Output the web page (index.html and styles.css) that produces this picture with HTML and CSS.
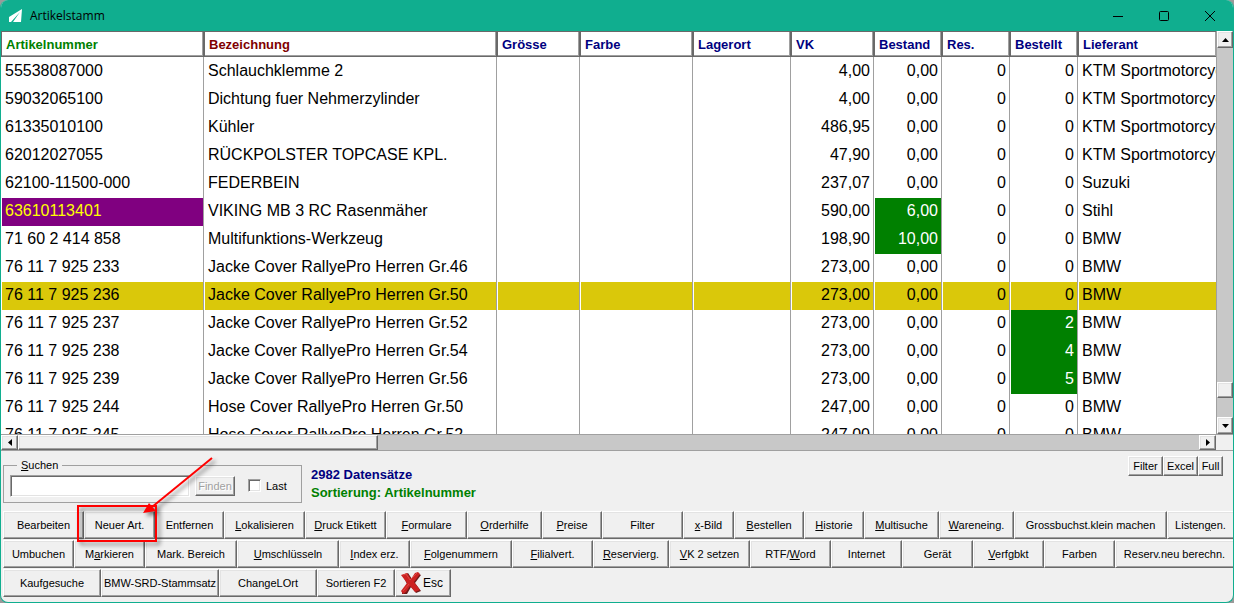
FILE: index.html
```
<!DOCTYPE html>
<html lang="de">
<head>
    <meta charset="UTF-8">
    <meta name="viewport" content="width=device-width, initial-scale=1.0">
    <title>Artikelstamm</title>
    <link rel="stylesheet" href="styles.css">
</head>
<body>
<div class="window">
    <header class="titlebar">
        <svg class="app-icon" width="14" height="14" viewBox="0 0 14 14">
            <path d="M13 0L0 8V13H2L11 3L4 13H12Z" fill="#fff"/>
        </svg>
        <span class="title">Artikelstamm</span>
        <button class="win-btn" aria-label="Minimieren"><svg width="12" height="12"><path d="M1 6.5H11"/></svg></button>
        <button class="win-btn" aria-label="Maximieren"><svg width="12" height="12"><rect x="1.5" y="1.5" width="9" height="9" rx="1"/></svg></button>
        <button class="win-btn" aria-label="Schliessen"><svg width="12" height="12"><path d="M1 1L11 11M11 1L1 11"/></svg></button>
    </header>

    <div class="grid-area">
        <div class="grid-view">
            <table class="articles">
                <colgroup>
                    <col class="c-nr"><col class="c-name"><col class="c-size"><col class="c-color"><col class="c-place">
                    <col class="c-vk"><col class="c-qty"><col class="c-qty"><col class="c-qty"><col>
                </colgroup>
                <thead>
                    <tr>
                        <th class="sorted">Artikelnummer</th><th class="key">Bezeichnung</th><th>Grösse</th><th>Farbe</th><th>Lagerort</th>
                        <th>VK</th><th>Bestand</th><th>Res.</th><th>Bestellt</th><th>Lieferant</th>
                    </tr>
                </thead>
                <tbody>
                    <tr><td>55538087000</td><td>Schlauchklemme 2</td><td></td><td></td><td></td><td class="num">4,00</td><td class="num">0,00</td><td class="num">0</td><td class="num">0</td><td>KTM Sportmotorcycle</td></tr>
                    <tr><td>59032065100</td><td>Dichtung fuer Nehmerzylinder</td><td></td><td></td><td></td><td class="num">4,00</td><td class="num">0,00</td><td class="num">0</td><td class="num">0</td><td>KTM Sportmotorcycle</td></tr>
                    <tr><td>61335010100</td><td>Kühler</td><td></td><td></td><td></td><td class="num">486,95</td><td class="num">0,00</td><td class="num">0</td><td class="num">0</td><td>KTM Sportmotorcycle</td></tr>
                    <tr><td>62012027055</td><td>RÜCKPOLSTER TOPCASE KPL.</td><td></td><td></td><td></td><td class="num">47,90</td><td class="num">0,00</td><td class="num">0</td><td class="num">0</td><td>KTM Sportmotorcycle</td></tr>
                    <tr><td>62100-11500-000</td><td>FEDERBEIN</td><td></td><td></td><td></td><td class="num">237,07</td><td class="num">0,00</td><td class="num">0</td><td class="num">0</td><td>Suzuki</td></tr>
                    <tr><td class="marked">63610113401</td><td>VIKING MB 3 RC Rasenmäher</td><td></td><td></td><td></td><td class="num">590,00</td><td class="num stock">6,00</td><td class="num">0</td><td class="num">0</td><td>Stihl</td></tr>
                    <tr><td>71 60 2 414 858</td><td>Multifunktions-Werkzeug</td><td></td><td></td><td></td><td class="num">198,90</td><td class="num stock">10,00</td><td class="num">0</td><td class="num">0</td><td>BMW</td></tr>
                    <tr><td>76 11 7 925 233</td><td>Jacke Cover RallyePro Herren Gr.46</td><td></td><td></td><td></td><td class="num">273,00</td><td class="num">0,00</td><td class="num">0</td><td class="num">0</td><td>BMW</td></tr>
                    <tr class="current"><td>76 11 7 925 236</td><td>Jacke Cover RallyePro Herren Gr.50</td><td></td><td></td><td></td><td class="num">273,00</td><td class="num">0,00</td><td class="num">0</td><td class="num">0</td><td>BMW</td></tr>
                    <tr><td>76 11 7 925 237</td><td>Jacke Cover RallyePro Herren Gr.52</td><td></td><td></td><td></td><td class="num">273,00</td><td class="num">0,00</td><td class="num">0</td><td class="num stock">2</td><td>BMW</td></tr>
                    <tr><td>76 11 7 925 238</td><td>Jacke Cover RallyePro Herren Gr.54</td><td></td><td></td><td></td><td class="num">273,00</td><td class="num">0,00</td><td class="num">0</td><td class="num stock">4</td><td>BMW</td></tr>
                    <tr><td>76 11 7 925 239</td><td>Jacke Cover RallyePro Herren Gr.56</td><td></td><td></td><td></td><td class="num">273,00</td><td class="num">0,00</td><td class="num">0</td><td class="num stock">5</td><td>BMW</td></tr>
                    <tr><td>76 11 7 925 244</td><td>Hose Cover RallyePro Herren Gr.50</td><td></td><td></td><td></td><td class="num">247,00</td><td class="num">0,00</td><td class="num">0</td><td class="num">0</td><td>BMW</td></tr>
                    <tr><td>76 11 7 925 245</td><td>Hose Cover RallyePro Herren Gr.52</td><td></td><td></td><td></td><td class="num">247,00</td><td class="num">0,00</td><td class="num">0</td><td class="num">0</td><td>BMW</td></tr>
                </tbody>
            </table>
        </div>
        <div class="scrollbar vertical">
            <button class="bevel scroll-btn" aria-label="Nach oben"><svg width="7" height="4"><path d="M0 4L3.5 0L7 4Z"/></svg></button>
            <div class="track before"></div>
            <div class="bevel thumb"></div>
            <div class="track after"></div>
            <button class="bevel scroll-btn" aria-label="Nach unten"><svg width="7" height="4"><path d="M0 0L3.5 4L7 0Z"/></svg></button>
        </div>
    </div>
    <div class="scrollbar horizontal">
        <button class="bevel scroll-btn" aria-label="Nach links"><svg width="4" height="7"><path d="M4 0L0 3.5L4 7Z"/></svg></button>
        <div class="bevel thumb"></div>
        <div class="track after"></div>
        <button class="bevel scroll-btn" aria-label="Nach rechts"><svg width="4" height="7"><path d="M0 0L4 3.5L0 7Z"/></svg></button>
    </div>

    <div class="panel">
        <div class="search-row">
            <fieldset class="search">
                <legend><label for="suche"><u>S</u>uchen</label></legend>
                <input type="text" id="suche">
                <button class="bevel" disabled>Finden</button>
                <input type="checkbox" id="last">
                <label for="last">Last</label>
            </fieldset>
            <div class="status">
                <div class="count">2982 Datensätze</div>
                <div class="sorting">Sortierung: Artikelnummer</div>
            </div>
            <div class="view-buttons">
                <button class="bevel">Filter</button>
                <button class="bevel">Excel</button>
                <button class="bevel">Full</button>
            </div>
        </div>

        <div class="toolbar row1">
            <button class="bevel">Bearbeiten</button>
            <button class="bevel">Neuer Art.</button>
            <button class="bevel">Entfernen</button>
            <button class="bevel"><u>L</u>okalisieren</button>
            <button class="bevel"><u>D</u>ruck Etikett</button>
            <button class="bevel"><u>F</u>ormulare</button>
            <button class="bevel"><u>O</u>rderhilfe</button>
            <button class="bevel"><u>P</u>reise</button>
            <button class="bevel">Filter</button>
            <button class="bevel"><u>x</u>-Bild</button>
            <button class="bevel"><u>B</u>estellen</button>
            <button class="bevel"><u>H</u>istorie</button>
            <button class="bevel"><u>M</u>ultisuche</button>
            <button class="bevel"><u>W</u>areneing.</button>
            <button class="bevel">Grossbuchst.klein machen</button>
            <button class="bevel cut">Listen<u>g</u>en.</button>
        </div>
        <div class="toolbar row2">
            <button class="bevel">Umbuchen</button>
            <button class="bevel">M<u>a</u>rkieren</button>
            <button class="bevel">Mark. Bereich</button>
            <button class="bevel"><u>U</u>mschlüsseln</button>
            <button class="bevel"><u>I</u>ndex erz.</button>
            <button class="bevel"><u>F</u>olgenummern</button>
            <button class="bevel"><u>F</u>ilialvert.</button>
            <button class="bevel"><u>R</u>eservierg.</button>
            <button class="bevel"><u>V</u>K 2 setzen</button>
            <button class="bevel">RTF/<u>W</u>ord</button>
            <button class="bevel">Internet</button>
            <button class="bevel">Gerät</button>
            <button class="bevel"><u>V</u>erfgbkt</button>
            <button class="bevel">Farben</button>
            <button class="bevel cut">Reserv.neu berechn.</button>
        </div>
        <div class="toolbar row3">
            <button class="bevel">Kaufgesuche</button>
            <button class="bevel">BMW-SRD-Stammsatz</button>
            <button class="bevel">ChangeLOrt</button>
            <button class="bevel">Sortieren F2</button>
            <button class="bevel esc">
                <svg width="20" height="23" viewBox="0 0 20 23">
                    <path d="M2 4L7 1L11 7L16 1L20 3L14 11L20 19L15 21L10 15L6 22L1 22L1 19L6 12Z" fill="#6e1a1a"/>
                    <path d="M0 3L6 1L10 7L14 1L17 0L19 2L13 10L19 18L14 20L9 14L5 20L2 22L0 19L6 11Z" fill="#cc2222"/>
                    <path d="M2 3L5 2L9 8L16 1M2 19L8 12" fill="none" stroke="#dd4a44"/>
                </svg>
                Esc
            </button>
        </div>

        <!-- Hinweis auf "Neuer Art." -->
        <svg class="callout" width="160" height="100" viewBox="0 0 160 100">
            <g class="callout-shape">
                <rect x="10" y="55" width="78" height="35" fill="none" stroke="#f00" stroke-width="2"/>
                <path d="M144 7L84 56" stroke="#f00" stroke-width="2"/>
                <path d="M75 62L81 52L88 60Z" fill="#f00"/>
            </g>
        </svg>
    </div>
</div>
</body>
</html>
```
FILE: styles.css
```
* {
    box-sizing: border-box;
}
body {
    margin: 0;
    background: #9a9a9a;
    font-family: "Liberation Sans", Arial, sans-serif;
    font-size: 11px;
    color: #000;
}
.window {
    display: flex;
    flex-direction: column;
    height: 100vh;
    border: 1px solid #10ae8f;
    border-top: 0;
    border-radius: 8px;
    overflow: hidden;
    background: #f0f0f0;
}

/* Title bar */
.titlebar {
    display: flex;
    align-items: center;
    flex: none;
    height: 31px;
    padding-left: 8px;
    background: #10ae8f;
}
.title {
    flex: 1;
    margin-left: 7px;
    font: 12px "Open Sans", sans-serif;
}
.win-btn {
    width: 46px;
    height: 31px;
    padding: 0;
    border: 0;
    background: none;
}
.win-btn svg {
    display: block;
    margin: 0 auto;
    fill: none;
    stroke: #000;
}

/* Raised button look */
button {
    font: inherit;
    color: inherit;
}
.bevel {
    min-width: 0;
    padding: 0;
    background: #f0f0f0;
    border: 1px solid;
    border-color: #fff #696969 #696969 #fff;
    border-radius: 0;
    box-shadow: inset -1px -1px #a0a0a0, inset 1px 1px #e3e3e3;
    white-space: nowrap;
}
.bevel:disabled {
    color: #a0a0a0;
    text-shadow: 1px 1px #fff;
}

/* Article table */
.grid-area {
    display: flex;
    flex: 1;
    min-height: 0;
}
.grid-view {
    flex: 1;
    overflow: hidden;
    background: #fff;
}
.articles {
    width: 100%;
    table-layout: fixed;
    border-collapse: separate;
    border-spacing: 0;
}
.c-nr { width: 203px; }
.c-name { width: 293px; }
.c-size { width: 83px; }
.c-color { width: 113px; }
.c-place { width: 98px; }
.c-vk { width: 83px; }
.c-qty { width: 68px; }

.articles th {
    height: 26px;
    padding: 0 4px;
    border: 1px solid #696969;
    box-shadow: inset -1px -1px #a0a0a0;
    font-size: 13px;
    text-align: left;
    color: #000080;
}
.articles th.sorted { color: #008000; }
.articles th.key { color: #800000; }
.articles td {
    height: 28px;
    padding: 0 3px 2px;
    border-left: 1px solid #fff;
    border-right: 1px solid #a0a0a0;
    background-clip: padding-box;
    font-size: 16px;
    line-height: 20px;
    white-space: nowrap;
    overflow: hidden;
}
.articles tbody tr:first-child td {
    height: 29px;
    padding-bottom: 1px;
}
.articles th:last-child,
.articles td:last-child {
    border-right: 0;
}
.articles .num { text-align: right; }
.articles .current td { background-color: #dac80a; }
.articles .marked {
    background-color: #800080;
    color: #ff0;
}
.articles .stock {
    background-color: #008000;
    color: #fff;
}

/* Scrollbars */
.scrollbar {
    display: flex;
    flex: none;
}
.scrollbar .track { background: #c8c8c8; }
.scroll-btn {
    flex: none;
    width: 17px;
    height: 17px;
}
.scroll-btn svg {
    display: block;
    margin: 0 auto;
}
.vertical {
    flex-direction: column;
    width: 17px;
    border-left: 1px solid #a0a0a0;
}
.vertical .scroll-btn { width: 16px; }
.vertical .before { flex: 335; }
.vertical .thumb { height: 16px; }
.vertical .after { flex: 19; }
.horizontal {
    height: 17px;
    padding-right: 17px;
    border-top: 1px solid #a0a0a0;
    border-bottom: 1px solid #a0a0a0;
}
.horizontal .scroll-btn { height: 15px; }
.horizontal .thumb { flex: 359; }
.horizontal .after { flex: 822; }

/* Lower panel */
.panel {
    position: relative;
    flex: none;
    padding: 5px 0 4px 2px;
}
.search-row {
    display: flex;
    align-items: flex-start;
    height: 55px;
}
.search {
    display: flex;
    align-items: center;
    width: 299px;
    height: 44px;
    margin: 3px 0 0;
    padding: 0 6px 2px;
    border: 1px solid #a0a0a0;
}
.search legend {
    margin-left: 7px;
    padding: 0 4px;
}
.search input[type="text"] {
    width: 180px;
    height: 22px;
    border: 1px solid;
    border-color: #a0a0a0 #fff #fff #a0a0a0;
    box-shadow: inset 1px 1px #696969, inset -1px -1px #e3e3e3;
    background: #fff;
}
.search button {
    width: 40px;
    height: 20px;
    margin-left: 5px;
}
.search input[type="checkbox"] {
    appearance: none;
    width: 13px;
    height: 13px;
    margin: 0 5px 0 13px;
    border: 1px solid;
    border-color: #a0a0a0 #fff #fff #a0a0a0;
    box-shadow: inset 1px 1px #696969, inset -1px -1px #e3e3e3;
    background: #fff;
}
.status {
    flex: 1;
    margin: 10px 0 0 9px;
    font-size: 13px;
    line-height: 18px;
    font-weight: bold;
}
.count { color: #000080; }
.sorting { color: #008000; }
.view-buttons {
    display: flex;
    margin-right: 10px;
}
.view-buttons button {
    width: 35px;
    height: 20px;
}
.view-buttons button:last-child { width: 25px; }

.toolbar {
    display: grid;
    height: 29px;
}
.row1 { grid-template-columns: 81fr 71fr 69fr 81fr 81fr 81fr 75fr 60fr 81fr 51fr 70fr 60fr 75fr 75fr 153fr 66fr; }
.row2 { grid-template-columns: 71fr 71fr 92fr 102fr 71fr 102fr 81fr 76fr 81fr 81fr 71fr 71fr 71fr 71fr 118fr; }
.row3 { grid-template-columns: 98fr 118fr 98fr 78fr 56fr 782fr; }
.toolbar button { height: 28px; }
.toolbar .cut {
    border-right: 0;
    box-shadow: inset 1px 1px #e3e3e3, inset 0 -1px #a0a0a0;
}
.toolbar .esc {
    display: flex;
    align-items: center;
    gap: 2px;
    padding: 0 5px;
    font-size: 12px;
}

.callout {
    position: absolute;
    top: 0;
    left: 67px;
    pointer-events: none;
}
.callout-shape { filter: drop-shadow(3px 3px 2px rgba(0, 0, 0, 0.5)); }
```
